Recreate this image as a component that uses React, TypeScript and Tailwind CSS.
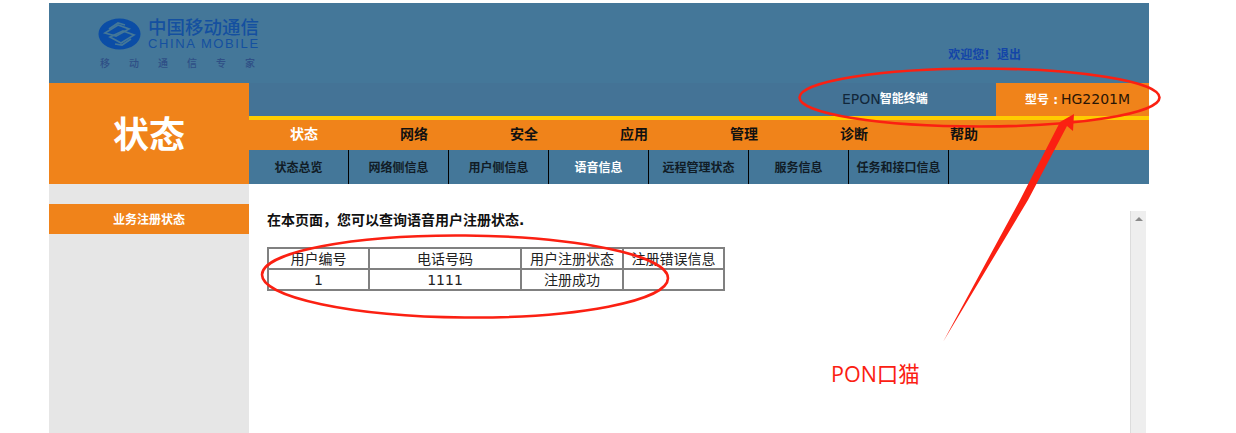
const FONT = { fontFamily: '"DejaVu Sans","Noto Sans CJK SC",sans-serif' };

const mainNav = ["状态", "网络", "安全", "应用", "管理", "诊断", "帮助"];
const subNav = ["状态总览", "网络侧信息", "用户侧信息", "语音信息", "远程管理状态", "服务信息", "任务和接口信息"];

function Logo() {
  return (
    <div className="flex flex-col">
      <div className="flex items-center gap-[7px]">
        <svg width="43" height="32" viewBox="0 0 43 32">
          <ellipse cx="21.5" cy="16" rx="21" ry="15.5" fill="#0b4da6" />
          <g fill="none" stroke="#447798" strokeWidth="1.7">
            <path d="M7 15 L20 7 L31 11 L18 18 Z" />
            <path d="M12 19 L25 13 L36 17 L23 25 Z" />
            <path d="M11 11 L20 5 L27 7" />
            <path d="M17 26 L24 27 L33 21" />
          </g>
        </svg>
        <div className="flex flex-col">
          <span className="whitespace-nowrap text-[18.5px] font-medium leading-[19px] text-[#1450a0]" style={FONT}>中国移动通信</span>
          <span className="whitespace-nowrap text-[13px] leading-[13px] tracking-[1.6px] text-[#1450a0]" style={{ fontFamily: '"Liberation Sans",sans-serif' }}>CHINA MOBILE</span>
        </div>
      </div>
      <div className="mt-[8px] flex w-[160px] justify-between pl-[2px] pr-[3px] text-[10px] font-medium leading-[12px] text-[#2f4f86]" style={FONT}>
        {"移动通信专家".split("").map((c, i) => <span key={i}>{c}</span>)}
      </div>
    </div>
  );
}

function Annotations() {
  return (
    <svg className="pointer-events-none absolute left-0 top-0" width="1236" height="433" viewBox="0 0 1236 433">
      <ellipse cx="979.5" cy="97.5" rx="180" ry="29" fill="none" stroke="#fb2012" strokeWidth="2.6" />
      <ellipse cx="465" cy="276.5" rx="203" ry="41" fill="none" stroke="#fb2012" strokeWidth="2.6" transform="rotate(0.5 465 276.5)" />
      <path d="M943 342 L1020 200 L1059 124 L1060 122 L1074 114 L1073 131 L1067 126 L1028 200 Z" fill="#fb2012" />
    </svg>
  );
}

export default function App() {
  return (
    <div className="relative h-[433px] w-[1236px] overflow-hidden bg-white pl-[49px] pt-[3px]" style={FONT}>
      <div className="w-[1100px]">
        <header className="relative flex h-[80px] bg-[#447799] pl-[49px] pt-[15px]">
          <Logo />
          <div className="ml-auto mr-[128px] mt-[29px] text-[12px] font-bold leading-[16px] text-[#1345a8]">
            欢迎您! <span className="ml-[3px]">退出</span>
          </div>
        </header>

        <div className="flex">
          <div className="flex h-[101px] w-[200px] items-center justify-center bg-[#f0831a] pt-[4px] text-[36px] font-bold text-white">
            状态
          </div>
          <div className="flex w-[900px] flex-col">
            <div className="flex h-[33px] bg-[#447396]">
              <div className="flex w-[747px] items-center pl-[593px] text-[14px] leading-[33px] text-[#12273a]">
                EPON<span className="-ml-px whitespace-nowrap text-[12px] font-bold text-white">智能终端</span>
              </div>
              <div className="flex flex-1 items-center whitespace-nowrap bg-[#f0831a] pl-[29px] text-[14px] text-[#2a1505]">
                <span className="text-[12px] font-bold text-white">型号 :</span>
                <span className="ml-[3px]">HG2201M</span>
              </div>
            </div>
            <div className="h-[4px] bg-[#ffcc00]" />
            <nav className="flex h-[30px] items-center bg-[#f0831a] pb-[1px]">
              {mainNav.map((t, i) => (
                <span key={t} className={`w-[110px] text-center text-[14px] font-bold ${i === 0 ? "text-white" : "text-[#111]"}`}>{t}</span>
              ))}
            </nav>
            <nav className="flex h-[34px] bg-[#447799]">
              {subNav.map((t, i) => (
                <span
                  key={t}
                  className={`flex w-[100px] items-center justify-center whitespace-nowrap border-r border-black pt-[2px] text-[12px] font-bold ${i === 3 ? "text-white" : "text-[#111c26]"}`}
                >
                  {t}
                </span>
              ))}
            </nav>
          </div>
        </div>

        <div className="flex h-[249px]">
          <aside className="w-[200px] bg-[#e6e6e6] pt-[20px]">
            <div className="flex h-[30px] items-center justify-center bg-[#f0831a] pt-[2px] text-[12px] font-bold text-white">业务注册状态</div>
          </aside>
          <main className="relative flex-1 bg-white">
            <p className="whitespace-nowrap pl-[18px] pt-[28px] text-[14px] font-bold leading-[17px] text-[#111]">在本页面，您可以查询语音用户注册状态.</p>
            <table className="ml-[18px] mt-[18px] w-[458px] table-fixed border-separate border-spacing-0 border border-[#808080] text-center text-[14px] text-[#222]">
              <colgroup>
                <col className="w-[101px]" />
                <col className="w-[152px]" />
                <col className="w-[102px]" />
                <col className="w-[101px]" />
              </colgroup>
              <tbody>
                <tr className="h-[21px]">
                  {["用户编号", "电话号码", "用户注册状态", "注册错误信息"].map((t) => (
                    <td key={t} className="whitespace-nowrap border border-[#808080] p-0 pt-px leading-[18px]">{t}</td>
                  ))}
                </tr>
                <tr className="h-[21px]">
                  {["1", "1111", "注册成功", ""].map((t, i) => (
                    <td key={i} className="whitespace-nowrap border border-[#808080] p-0 pt-px leading-[18px]">{t}</td>
                  ))}
                </tr>
              </tbody>
            </table>
            <div className="absolute left-[881px] top-[27px] flex h-[222px] w-[16px] justify-center border-l border-[#dcdcdc] bg-[#eeeeee] pt-[6px]">
              <div className="h-0 w-0 border-x-[4px] border-b-[4px] border-x-transparent border-b-[#8a8a8a]" />
            </div>
          </main>
        </div>
      </div>
      <div className="absolute left-[831px] top-[360px] whitespace-nowrap text-[21.5px] leading-[28px] text-[#fb2012]" style={{ fontFamily: '"Open Sans","Noto Sans CJK SC",sans-serif' }}>PON口猫</div>
      <Annotations />
    </div>
  );
}
